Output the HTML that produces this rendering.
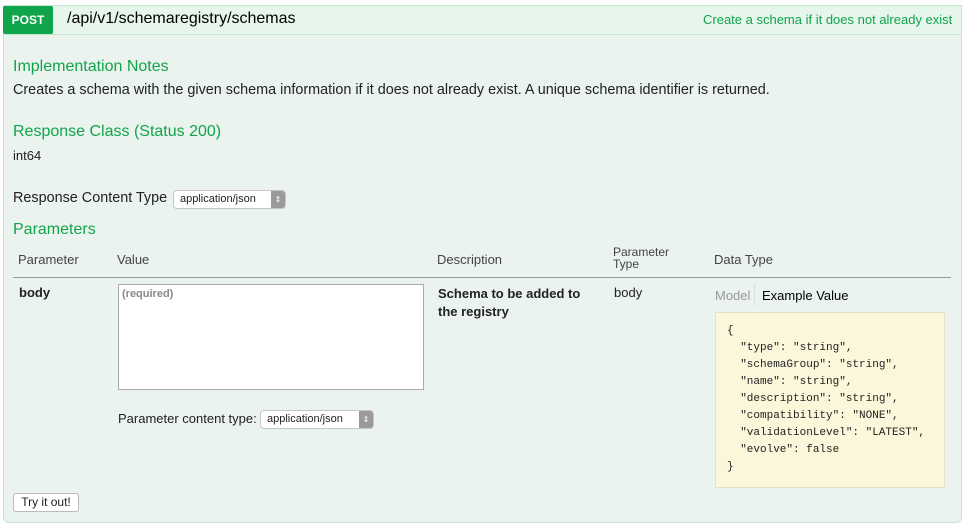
<!DOCTYPE html>
<html><head><meta charset="utf-8"><style>
*{box-sizing:border-box;margin:0;padding:0}
body{width:971px;height:529px;background:#fff;font-family:"Liberation Sans",Arial,sans-serif;font-size:13px;color:#222;position:relative;overflow:hidden}
.a{position:absolute;white-space:nowrap}
.box{position:absolute;left:3px;top:5px;width:959px;height:518px;border:1px solid #c3e8d1;border-radius:0 0 6px 6px;background:#ebf3ee}
.hdr{position:absolute;left:3px;top:5px;width:959px;height:30px;background:#e7f6ec;border:1px solid #c3e8d1}
.post{position:absolute;left:3px;top:6px;width:50px;height:28px;background:#10a54a;color:#fff;font-weight:bold;font-size:12px;text-align:center;line-height:28px;border-radius:2px}
.g{color:#10a54a;font-size:16px}
.sel{position:absolute;height:19px;background:#fff;border:1px solid #c6c6c6;border-radius:4px;font-size:11px;line-height:17px;padding-left:6px}
.sel i{position:absolute;right:0;top:0;width:14px;height:17px;background:#9a9a9a;border-radius:0 3px 3px 0;color:#fff;font-style:normal;font-size:8px;text-align:center;line-height:17px}
.th{color:#444;font-size:13px}
pre.a{font-family:"Liberation Mono",monospace;font-size:11px;line-height:17px;white-space:pre}
</style></head><body>
<div class="box"></div>
<div class="hdr"></div>
<div class="post">POST</div>
<div class="a" style="left:67px;top:10px;font-size:16px;color:#000">/api/v1/schemaregistry/schemas</div>
<div class="a" style="left:703px;top:12px;color:#10a54a;font-size:13px">Create a schema if it does not already exist</div>
<div class="a g" style="left:13px;top:58px">Implementation Notes</div>
<div class="a" style="left:13px;top:82px;font-size:14.4px">Creates a schema with the given schema information if it does not already exist. A unique schema identifier is returned.</div>
<div class="a g" style="left:13px;top:123px">Response Class (Status 200)</div>
<div class="a" style="left:13px;top:148px">int64</div>
<div class="a" style="left:13px;top:190px;font-size:14.4px">Response Content Type</div>
<div class="sel" style="left:173px;top:190px;width:113px">application/json<i>⇕</i></div>
<div class="a g" style="left:13px;top:221px">Parameters</div>
<div class="a th" style="left:18px;top:252px">Parameter</div>
<div class="a th" style="left:117px;top:252px">Value</div>
<div class="a th" style="left:437px;top:252px">Description</div>
<div class="a th" style="left:613px;top:246px;font-size:12px;line-height:12px">Parameter<br>Type</div>
<div class="a th" style="left:714px;top:252px">Data Type</div>
<div class="a" style="left:13px;top:277px;width:938px;height:1px;background:#999"></div>
<div class="a" style="left:19px;top:285px;font-weight:bold">body</div>
<div class="a" style="left:118px;top:284px;width:306px;height:106px;background:#fff;border:1px solid #aaa"></div>
<div class="a" style="left:122px;top:288px;font-size:11px;font-weight:bold;color:#888">(required)</div>
<div class="a" style="left:118px;top:411px">Parameter content type:</div>
<div class="sel" style="left:260px;top:410px;width:114px">application/json<i>⇕</i></div>
<div class="a" style="left:438px;top:285px;font-weight:bold;line-height:18px">Schema to be added to<br>the registry</div>
<div class="a" style="left:614px;top:285px">body</div>
<div class="a" style="left:715px;top:288px;color:#999">Model</div>
<div class="a" style="left:754px;top:284px;width:1px;height:22px;background:#ddd"></div>
<div class="a" style="left:762px;top:288px;color:#000">Example Value</div>
<div class="a" style="left:715px;top:312px;width:230px;height:176px;background:#fcf6db;border:1px solid #e5e0c6"></div>
<pre class="a" style="left:727px;top:323px">{
  "type": "string",
  "schemaGroup": "string",
  "name": "string",
  "description": "string",
  "compatibility": "NONE",
  "validationLevel": "LATEST",
  "evolve": false
}</pre>
<div class="a" style="left:13px;top:493px;width:66px;height:19px;background:#fff;border:1px solid #bbb;border-radius:3px;font-size:12px;text-align:center;line-height:17px">Try it out!</div>
</body></html>
